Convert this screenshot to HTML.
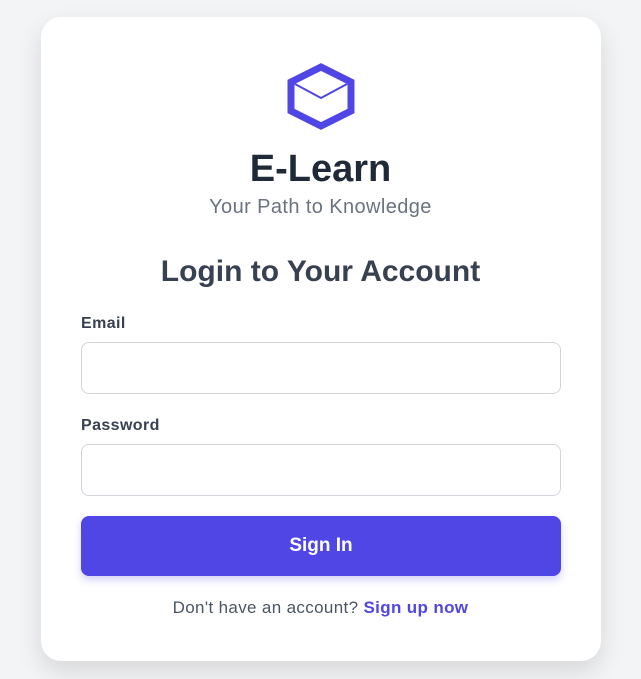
<!DOCTYPE html>
<html><head><style>
body{margin:0;width:641px;height:679px;background:#f3f4f6;font-family:"Liberation Sans",sans-serif;position:relative;overflow:hidden}
.card{position:absolute;left:41px;top:17px;width:560px;height:644px;background:#fff;border-radius:20px;box-shadow:0 10px 25px rgba(0,0,0,0.12)}
.t{position:absolute;left:0;width:641px;text-align:center}
.lbl{position:absolute;left:81px;font-size:16px;color:#374151;font-weight:bold;letter-spacing:0.4px}
.in{position:absolute;left:81px;width:478px;height:50px;border:1px solid #d1d5db;border-radius:8px;background:#fff}
.btn{position:absolute;left:81px;top:516px;width:480px;height:60px;background:#4f46e5;border-radius:8px;color:#fff;font-weight:bold;font-size:19px;text-align:center;line-height:60px;box-shadow:0 4px 8px rgba(79,70,229,0.25)}
</style></head><body>
<div class="card"></div>
<svg style="position:absolute;left:0;top:0" width="641" height="679">
<polygon points="321,67 351,82 351,111 321,126 291,111 291,82" fill="none" stroke="#4f46e5" stroke-width="7" stroke-linejoin="miter"/>
<polyline points="295,84 321,98 347,84" fill="none" stroke="#4f46e5" stroke-width="2"/>
</svg>
<div class="t" style="top:148px;font-size:38px;font-weight:bold;color:#1f2937">E-Learn</div>
<div class="t" style="top:196px;font-size:20px;color:#6b7280;letter-spacing:0.4px">Your Path to Knowledge</div>
<div class="t" style="top:255px;font-size:30px;font-weight:bold;color:#374151">Login to Your Account</div>
<div class="lbl" style="top:315px">Email</div>
<div class="in" style="top:342px"></div>
<div class="lbl" style="top:417px">Password</div>
<div class="in" style="top:444px"></div>
<div class="btn">Sign In</div>
<div class="t" style="top:598px;font-size:17px;color:#4b5563;letter-spacing:0.35px">Don't have an account? <span style="color:#4f46e5;font-weight:bold">Sign up now</span></div>
</body></html>
